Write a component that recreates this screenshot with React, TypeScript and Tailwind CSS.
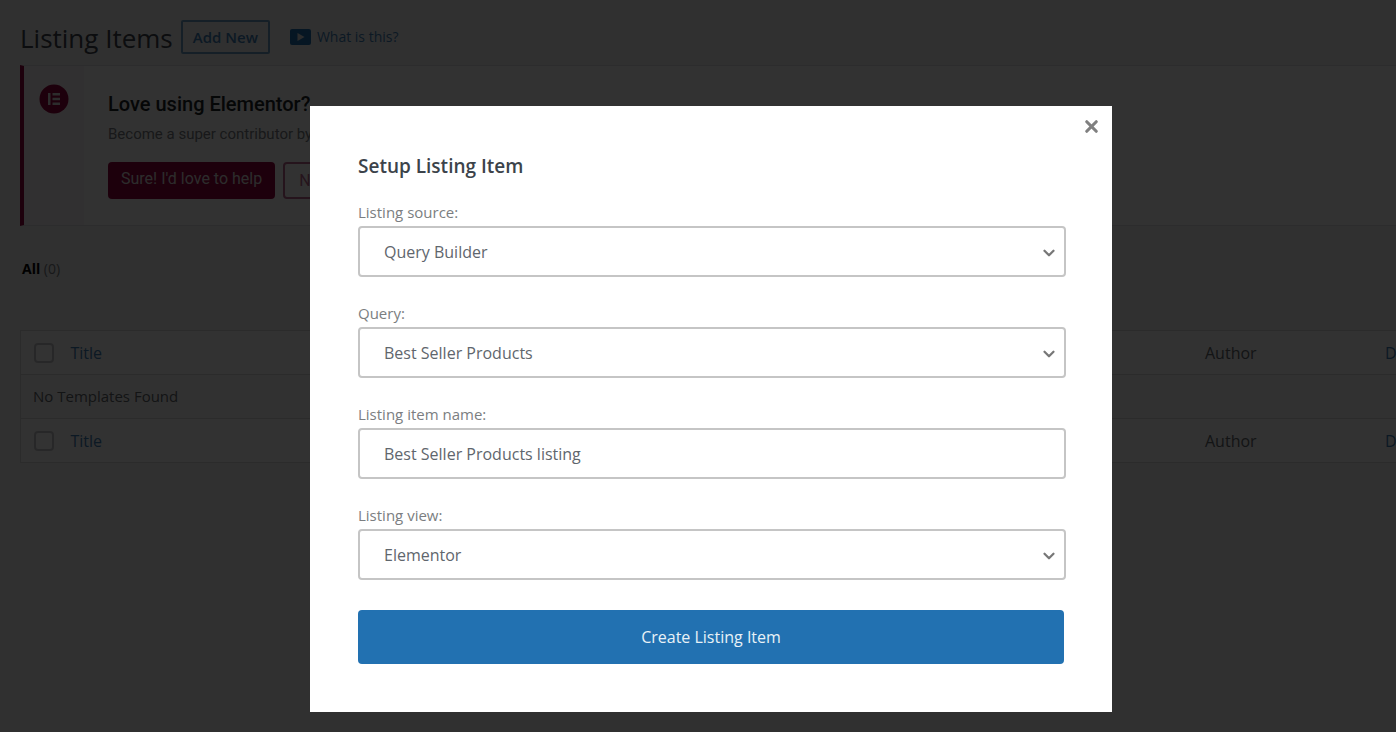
import { useState } from 'react';
import { ChevronDown, X } from 'lucide-react';

const ColumnRow = ({ place }: { place: string }) => {
    return (
        <tr className="h-11 border-y border-[#d4d5d8] bg-[#fafafa]">
            <th className="w-10 pl-[13px] text-left">
                <input
                    type="checkbox"
                    aria-label={`Select all (${place})`}
                    className="block size-5 appearance-none rounded border-2 border-[#c3c4c7] bg-white"
                />
            </th>
            <th className="pl-2.5 text-left font-normal">
                <a href="#title" className="text-[#3f7db3]">Title</a>
            </th>
            <th className="w-[180px] text-left font-normal text-[#60656a]">Author</th>
            <th className="w-[180px] text-left font-normal">
                <a href="#date" className="text-[#3f7db3]">Date</a>
            </th>
        </tr>
    );
};

const SelectField = ({ id, label, value, options }: { id: string; label: string; value: string; options: string[] }) => {
    const [selected, setSelected] = useState(value);

    return (
        <div className="flex flex-col gap-0.5">
            <label htmlFor={id} className="text-[15px] leading-6 text-[#7b7e81]">{label}</label>
            <div className="relative -mr-0.5">
                <select
                    id={id}
                    value={selected}
                    onChange={(e) => setSelected(e.target.value)}
                    className="h-[51px] w-full appearance-none rounded border-2 border-[#c5c5c5] bg-white px-6 text-base text-[#5f666d]"
                >
                    {options.map((option) => (
                        <option key={option}>{option}</option>
                    ))}
                </select>
                <ChevronDown className="pointer-events-none absolute top-[18px] right-2 size-[18px] text-[#777]" strokeWidth={3} />
            </div>
        </div>
    );
};

const ListingItemsPage = () => {
    return (
        <div className="min-h-screen overflow-hidden bg-[#f0f0f1] pt-5 pl-5 text-base text-[#60656a]">
            <div className="flex h-[34px] items-center">
                <h1 className="pt-0.5 text-[26px] text-[#3c434a]">Listing Items</h1>
                <a href="#add" className="ml-2 rounded-xs border-2 border-[#6c9cc0] px-2.5 text-[15px] leading-[30px] font-semibold text-[#3f7db3]">Add New</a>
                <a href="#help" className="ml-5 flex items-center gap-1.5 text-sm text-[#3f7db3]">
                    <svg viewBox="0 0 21 16" className="h-4 w-[21px]">
                        <rect width="21" height="16" rx="2" fill="#2271b1" />
                        <path d="M7.5 4v8l7-4z" fill="#ddd" />
                    </svg>
                    What is this?
                </a>
            </div>

            <div className="mt-[11px] flex h-[161px] border-y border-l-4 border-y-[#dcdcde] border-l-[#93003c] bg-[#fafafa] font-[Roboto,sans-serif]">
                <div className="flex w-[60px] justify-center bg-[#f4f1f2] pt-[18px]">
                    <svg viewBox="0 0 30 30" className="size-[30px]">
                        <circle cx="15" cy="15" r="14.500" fill="#93003c" />
                        <path d="M9 9h2.500v12H9zM13.500 9H21v2.500h-7.500zM13.500 13.750H21v2.500h-7.500zM13.500 18.500H21V21h-7.500z" fill="#ddd" />
                    </svg>
                </div>
                <div className="pt-6 pl-6">
                    <h2 className="text-xl leading-7 font-medium text-[#1d2327]">Love using Elementor?</h2>
                    <p className="text-[15px] leading-8 text-[#777b80]">Become a super contributor by opting in to share non-sensitive plugin data.</p>
                    <div className="flex gap-2 pt-3">
                        <button className="h-[37px] rounded bg-[#93003c] px-[13px] pb-1 text-[#ddd]">Sure! I'd love to help</button>
                        <button className="h-[37px] rounded border-2 border-[#b8648a] px-3.5 text-[#b8648a]">No thanks</button>
                    </div>
                </div>
            </div>

            <p className="pt-[31px] pl-0.5 text-sm leading-6 text-[#777b80]">
                <b className="text-black">All</b> (0)
            </p>

            {/* the date column runs past the right edge of the window */}
            <div className="mt-[49px] -mr-[169px]">
                <table className="w-full border-collapse border-l border-[#d4d5d8]">
                    <thead>
                        <ColumnRow place="top" />
                    </thead>
                    <tbody>
                        <tr className="h-11 bg-[#f6f6f6]">
                            <td colSpan={4} className="pl-3 text-[15px]">No Templates Found</td>
                        </tr>
                    </tbody>
                    <tfoot>
                        <ColumnRow place="bottom" />
                    </tfoot>
                </table>
            </div>
        </div>
    );
};

const SetupModal = () => {
    const [name, setName] = useState('Best Seller Products listing');

    return (
        <div className="fixed inset-0 flex items-start justify-center overflow-auto bg-black/80 pt-[106px] pl-[26px]">
            <div role="dialog" aria-labelledby="setup-title" className="relative w-full max-w-[802px] bg-white px-12 pt-11 pb-12">
                <button aria-label="Close" className="absolute top-[11px] right-[11px] text-[#808080]">
                    <X className="size-[19px]" strokeWidth={4} />
                </button>
                <h2 id="setup-title" className="text-[19px] leading-8 font-semibold text-[#3c434a]">Setup Listing Item</h2>
                <form className="flex flex-col gap-6 pt-[18px]" onSubmit={(e) => e.preventDefault()}>
                    <SelectField id="source" label="Listing source:" value="Query Builder" options={['Posts', 'Query Builder', 'Terms', 'Users']} />
                    <SelectField id="query" label="Query:" value="Best Seller Products" options={['Best Seller Products']} />
                    <div className="flex flex-col gap-0.5">
                        <label htmlFor="name" className="text-[15px] leading-6 text-[#7b7e81]">Listing item name:</label>
                        <input
                            id="name"
                            type="text"
                            value={name}
                            onChange={(e) => setName(e.target.value)}
                            className="-mr-0.5 h-[51px] rounded border-2 border-[#c5c5c5] px-6 text-base text-[#5f666d]"
                        />
                    </div>
                    <SelectField id="view" label="Listing view:" value="Elementor" options={['Elementor', 'Blocks']} />
                    <button type="submit" className="mt-1.5 h-[54px] rounded-sm bg-[#2271b1] text-base text-[#e8f1f7]">Create Listing Item</button>
                </form>
            </div>
        </div>
    );
};

const App = () => {
    return (
        <div className="font-['Open_Sans',sans-serif]">
            <ListingItemsPage />
            <SetupModal />
        </div>
    );
};

export default App;
